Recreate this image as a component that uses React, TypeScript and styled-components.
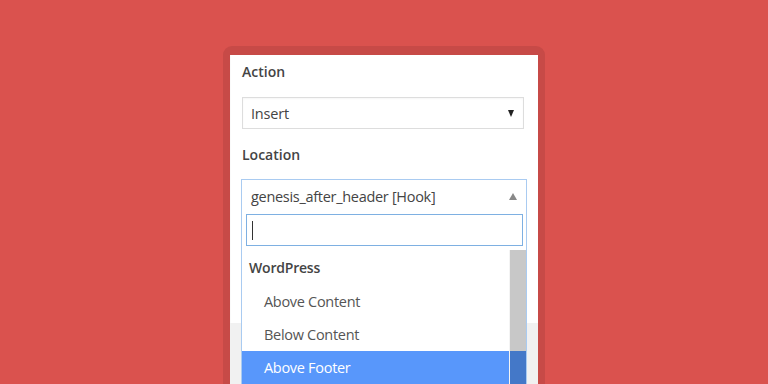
import React from "react";
import styled, { createGlobalStyle } from "styled-components";

const Global = createGlobalStyle`
  html, body { margin: 0; padding: 0; }
  body {
    width: 768px; height: 384px; overflow: hidden;
    background: #da524e;
    font-family: "Open Sans", "Noto Sans", sans-serif;
  }
`;

const Stage = styled.div`
  width: 768px;
  height: 384px;
  display: flex;
  justify-content: center;
  padding-top: 46px;
  box-sizing: border-box;
  overflow: hidden;
`;

const Frame = styled.div`
  width: 322px;
  height: 360px;
  box-sizing: border-box;
  background: #c74a47;
  border-radius: 9px 9px 0 0;
  padding: 9px 7px 0 7px;
  display: flex;
  flex-direction: column;
`;

const Panel = styled.div`
  flex: 1;
  display: flex;
  flex-direction: column;
  background: #f1f1f1;
  position: relative;
`;

const Body = styled.div`
  background: #fff;
  height: 268px;
  padding: 0 11px;
  box-sizing: border-box;
  border-left: 1px solid #fafafa;
`;

const Label = styled.div<{ $top: number }>`
  font-size: 14px;
  font-weight: 600;
  color: #444;
  height: 17px;
  line-height: 17px;
  margin-top: ${(p) => p.$top}px;
`;

const NativeSelect = styled.div`
  margin-top: 17px;
  width: 282px;
  height: 32px;
  box-sizing: border-box;
  border: 1px solid #ddd;
  display: flex;
  align-items: center;
  justify-content: space-between;
  padding: 0 9px 0 8px;
  font-size: 14.5px;
  letter-spacing: -0.2px;
  color: #444;
  box-shadow: inset 0 1px 2px rgba(0,0,0,0.04);
`;

const DownArrow = styled.span`
  width: 0; height: 0;
  border-left: 3.5px solid transparent;
  border-right: 3.5px solid transparent;
  border-top: 7px solid #222;
`;

const Combo = styled.div`
  position: absolute;
  left: 11px;
  top: 124px;
  width: 286px;
  box-sizing: border-box;
  border: 1px solid #a9cbf1;
  background: #fff;
`;

const ComboHead = styled.div`
  height: 33px;
  display: flex;
  align-items: center;
  justify-content: space-between;
  padding: 0 9px 0 9px;
  font-size: 14.5px;
  letter-spacing: -0.3px;
  color: #444;
`;

const UpArrow = styled.span`
  width: 0; height: 0;
  border-left: 4.5px solid transparent;
  border-right: 4.5px solid transparent;
  border-bottom: 7px solid #888;
`;

const SearchWrap = styled.div`
  padding: 1px 3px 4px 4px;
`;

const Search = styled.div`
  height: 32px;
  box-sizing: border-box;
  border: 1px solid #7eb0e2;
  display: flex;
  align-items: center;
  padding-left: 5px;
`;

const Caret = styled.span`
  width: 1px;
  height: 19px;
  background: #333;
`;

const ListArea = styled.div`
  position: relative;
  height: 140px;
  overflow: hidden;
`;

const Group = styled.div`
  height: 35px;
  display: flex;
  align-items: center;
  padding-left: 7px;
  font-size: 14px;
  font-weight: 600;
  letter-spacing: -0.2px;
  color: #444;
`;

const Option = styled.div<{ $active?: boolean }>`
  height: 33px;
  display: flex;
  align-items: center;
  padding-left: 22px;
  font-size: 14.5px;
  letter-spacing: -0.3px;
  color: ${(p) => (p.$active ? "#fff" : "#555")};
  background: ${(p) => (p.$active ? "#5897fb" : "transparent")};
`;

const Scrollbar = styled.div`
  position: absolute;
  right: 0;
  top: 0;
  width: 16px;
  height: 100%;
  background: #c8c8c8;
  border-left: 1px solid #f4f4f4;
`;

const ScrollOver = styled.div`
  position: absolute;
  right: 0;
  top: 101px;
  width: 16px;
  height: 40px;
  background: #4478c8;
`;

export default function App() {
  return (
    <>
      <Global />
      <Stage>
        <Frame>
          <Panel>
            <Body>
              <Label $top={8}>Action</Label>
              <NativeSelect>
                <span>Insert</span>
                <DownArrow />
              </NativeSelect>
              <Label $top={17}>Location</Label>
            </Body>
            <Combo>
              <ComboHead>
                <span>genesis_after_header [Hook]</span>
                <UpArrow />
              </ComboHead>
              <SearchWrap>
                <Search>
                  <Caret />
                </Search>
              </SearchWrap>
              <ListArea>
                <Group>WordPress</Group>
                <Option>Above Content</Option>
                <Option>Below Content</Option>
                <Option $active>Above Footer</Option>
                <Scrollbar />
                <ScrollOver />
              </ListArea>
            </Combo>
          </Panel>
        </Frame>
      </Stage>
    </>
  );
}
